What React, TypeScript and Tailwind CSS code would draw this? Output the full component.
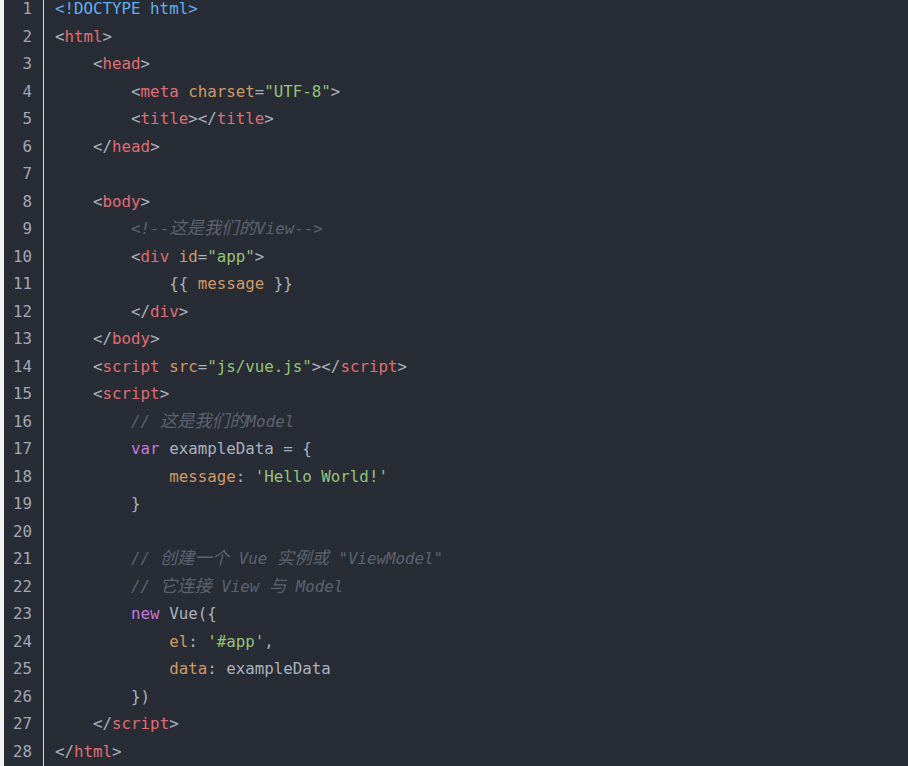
import React from "react";

// token kinds -> tailwind text classes
const tone = {
  p: "text-[#abb2bf]",
  t: "text-[#e06c75]",
  a: "text-[#d19a66]",
  s: "text-[#98c379]",
  d: "text-[#61afef]",
  c: "text-[#5c6370] italic",
  k: "text-[#c678dd]",
};

type Kind = keyof typeof tone;
type Token = [Kind, string];

const lines: Token[][] = [
  [["d", "<!DOCTYPE html>"]],
  [["p", "<"], ["t", "html"], ["p", ">"]],
  [["p", "    <"], ["t", "head"], ["p", ">"]],
  [["p", "        <"], ["t", "meta"], ["p", " "], ["a", "charset"], ["p", "="], ["s", "\"UTF-8\""], ["p", ">"]],
  [["p", "        <"], ["t", "title"], ["p", "></"], ["t", "title"], ["p", ">"]],
  [["p", "    </"], ["t", "head"], ["p", ">"]],
  [],
  [["p", "    <"], ["t", "body"], ["p", ">"]],
  [["p", "        "], ["c", "<!--这是我们的View-->"]],
  [["p", "        <"], ["t", "div"], ["p", " "], ["a", "id"], ["p", "="], ["s", "\"app\""], ["p", ">"]],
  [["p", "            {{ "], ["a", "message"], ["p", " }}"]],
  [["p", "        </"], ["t", "div"], ["p", ">"]],
  [["p", "    </"], ["t", "body"], ["p", ">"]],
  [["p", "    <"], ["t", "script"], ["p", " "], ["a", "src"], ["p", "="], ["s", "\"js/vue.js\""], ["p", "></"], ["t", "script"], ["p", ">"]],
  [["p", "    <"], ["t", "script"], ["p", ">"]],
  [["p", "        "], ["c", "// 这是我们的Model"]],
  [["p", "        "], ["k", "var"], ["p", " exampleData = {"]],
  [["p", "            "], ["a", "message"], ["p", ": "], ["s", "'Hello World!'"]],
  [["p", "        }"]],
  [],
  [["p", "        "], ["c", "// 创建一个 Vue 实例或 \"ViewModel\""]],
  [["p", "        "], ["c", "// 它连接 View 与 Model"]],
  [["p", "        "], ["k", "new"], ["p", " Vue({"]],
  [["p", "            "], ["a", "el"], ["p", ": "], ["s", "'#app'"], ["p", ","]],
  [["p", "            "], ["a", "data"], ["p", ": exampleData"]],
  [["p", "        })"]],
  [["p", "    </"], ["t", "script"], ["p", ">"]],
  [["p", "</"], ["t", "html"], ["p", ">"]],
];

// CJK glyphs render wider in the original, give them their own size
function Text({ text }: { text: string }) {
  const parts = text.split(/([\u4e00-\u9fff]+)/);
  return (
    <>
      {parts.map((part, i) =>
        /[\u4e00-\u9fff]/.test(part) ? (
          <span key={i} className="text-[17.4px]">
            {part}
          </span>
        ) : (
          <React.Fragment key={i}>{part}</React.Fragment>
        )
      )}
    </>
  );
}

export default function App() {
  return (
    <div
      className="flex h-[766px] w-full overflow-hidden bg-[#282c34] text-[15.8px] leading-[27.5px]"
      style={{ fontFamily: '"DejaVu Sans Mono", "Noto Sans CJK SC", monospace' }}
    >
      <div className="w-[4px] shrink-0 bg-[#f3f3f3]" />
      <div className="-mt-[5px] w-[40px] shrink-0 border-r border-[#d4d4d4] pr-[11px] text-right text-[#a0a8b7]">
        {lines.map((_, i) => (
          <div key={i} className="h-[27.5px]">
            {i + 1}
          </div>
        ))}
      </div>
      <div className="-mt-[5px] flex-1 whitespace-pre pl-[11px]">
        {lines.map((tokens, i) => (
          <div key={i} className="h-[27.5px]">
            {tokens.map(([kind, text], j) => (
              <span key={j} className={tone[kind]}>
                <Text text={text} />
              </span>
            ))}
          </div>
        ))}
      </div>
    </div>
  );
}
